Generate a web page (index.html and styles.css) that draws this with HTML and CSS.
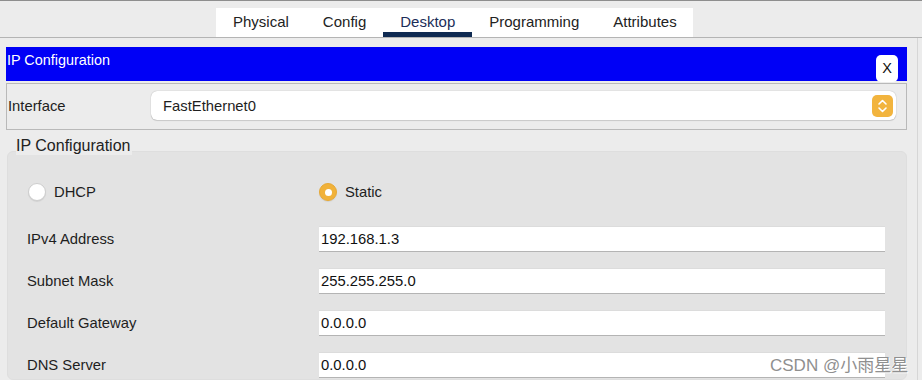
FILE: index.html
```html
<!DOCTYPE html>
<html lang="en">
<head>
    <meta charset="UTF-8">
    <meta name="viewport" content="width=device-width, initial-scale=1.0">
    <title>IP Configuration</title>
    <link rel="stylesheet" href="styles.css">
</head>
<body>
    <div class="topbar">
        <div class="tabs">
            <div class="tab">Physical</div>
            <div class="tab">Config</div>
            <div class="tab active">Desktop</div>
            <div class="tab">Programming</div>
            <div class="tab">Attributes</div>
        </div>
    </div>

    <div class="panel">
        <div class="titlebar">
            <div class="title">IP Configuration</div>
            <div class="close">X</div>
        </div>

        <div class="iface">
            <div class="iface-label">Interface</div>
            <div class="select">
                <span>FastEthernet0</span>
                <div class="stepper">
                    <svg width="11" height="16" viewBox="0 0 11 16">
                        <path d="M2 6 L5.5 2.5 L9 6 M2 10 L5.5 13.5 L9 10" fill="none" stroke="#fff" stroke-width="1.6" stroke-linecap="round" stroke-linejoin="round"/>
                    </svg>
                </div>
            </div>
        </div>

        <div class="group-label">IP Configuration</div>
        <div class="group">
            <div class="row">
                <div class="radio-cell">
                    <span class="radio"></span>
                    <span>DHCP</span>
                </div>
                <div class="radio-cell">
                    <span class="radio checked"></span>
                    <span>Static</span>
                </div>
            </div>
            <div class="row">
                <div class="label">IPv4 Address</div>
                <div class="field">192.168.1.3</div>
            </div>
            <div class="row">
                <div class="label">Subnet Mask</div>
                <div class="field">255.255.255.0</div>
            </div>
            <div class="row">
                <div class="label">Default Gateway</div>
                <div class="field">0.0.0.0</div>
            </div>
            <div class="row">
                <div class="label">DNS Server</div>
                <div class="field">0.0.0.0</div>
            </div>
        </div>
    </div>

    <div class="watermark">CSDN @小雨星星</div>
</body>
</html>
```

FILE: styles.css
```css
body {
    margin: 0;
    height: 380px;
    overflow: hidden;
    background: #ececec;
    font-family: "Liberation Sans", Arial, "Noto Sans CJK SC", sans-serif;
    font-size: 14.8px;
    color: #1e1e1e;
}
.topbar {
    height: 36px;
    border-top: 1px solid #8e8e8e;
    border-bottom: 1px solid #b4b4b4;
}
.tabs {
    display: flex;
    width: 477px;
    height: 29px;
    margin: 7px 0 0 216px;
    background: #fff;
    font-size: 15px;
}
.tab {
    height: 29px;
    line-height: 28px;
    padding: 0 17px;
    box-sizing: border-box;
    color: #222;
}
.tab.active {
    color: #1b2d58;
    border-bottom: 5px solid #0f2a52;
    line-height: 27px;
}
.panel {
    width: 918px;
    height: 342px;
    box-sizing: border-box;
    border-right: 1px solid #d6d6d6;
    padding: 9px 10px 0 6px;
}
.titlebar {
    display: flex;
    justify-content: space-between;
    height: 34px;
    background: #0000f6;
}
.title {
    color: #fff;
    font-size: 14.4px;
    line-height: 16px;
    padding: 5px 0 0 1px;
}
.close {
    align-self: flex-end;
    width: 22px;
    height: 27px;
    margin-right: 9px;
    margin-bottom: -1px;
    background: #fff;
    border-radius: 5px;
    text-align: center;
    line-height: 26px;
    font-size: 14.5px;
    color: #111;
}
.iface {
    display: flex;
    align-items: center;
    margin-top: 2px;
    height: 47px;
    box-sizing: border-box;
    border: 1px solid #b9b9b9;
    padding: 0 10px 2px 1px;
}
.iface-label {
    width: 143px;
}
.select {
    flex: 1;
    display: flex;
    align-items: center;
    justify-content: space-between;
    height: 29px;
    background: #fff;
    border-radius: 6px;
    box-shadow: 0 0 1px rgba(0, 0, 0, 0.35), 0 1px 1px rgba(0, 0, 0, 0.12);
    padding: 0 3px 0 12px;
}
.stepper {
    width: 21px;
    height: 22px;
    border-radius: 5px;
    background: #f2b43e;
    display: flex;
    align-items: center;
    justify-content: center;
}
.group-label {
    position: relative;
    z-index: 1;
    width: fit-content;
    margin: 7px 0 0 10px;
    padding-right: 2px;
    font-size: 16px;
    line-height: 18px;
    background: #ececec;
    color: #222;
}
.group {
    margin: -4px 0 0 1px;
    height: 229px;
    box-sizing: border-box;
    background: #e3e3e3;
    border: 1px solid #dedede;
    border-radius: 6px;
    padding: 27px 21px 0 19px;
    display: flex;
    flex-direction: column;
    gap: 16px;
    overflow: hidden;
}
.row {
    display: grid;
    grid-template-columns: 292px 1fr;
    align-items: center;
    height: 26px;
    flex-shrink: 0;
}
.row:first-child {
    margin-bottom: 5px;
}
.radio-cell {
    display: flex;
    align-items: center;
    gap: 8px;
}
.radio {
    width: 16px;
    height: 16px;
    border-radius: 50%;
    background: #fff;
    border: 1px solid #cdcdcd;
    box-shadow: 0 1px 1px rgba(0, 0, 0, 0.08);
    margin-left: 1px;
    display: flex;
    align-items: center;
    justify-content: center;
}
.radio.checked {
    background: #f1b23a;
    border-color: #e7a935;
    margin-left: 0;
}
.radio.checked::after {
    content: "";
    width: 7px;
    height: 7px;
    border-radius: 50%;
    background: #fff;
}
.field {
    height: 26px;
    box-sizing: border-box;
    background: #fff;
    border-top: 1px solid #dcdcdc;
    border-bottom: 1px solid #b4b4b4;
    padding-left: 2px;
    line-height: 24px;
    color: #111;
}
.watermark {
    position: absolute;
    left: 770px;
    top: 351px;
    font-size: 17px;
    color: #8f8f8f;
    text-shadow: 1px 1px 0 #fff, -1px 0 0 rgba(255, 255, 255, 0.7);
    white-space: nowrap;
}
```
